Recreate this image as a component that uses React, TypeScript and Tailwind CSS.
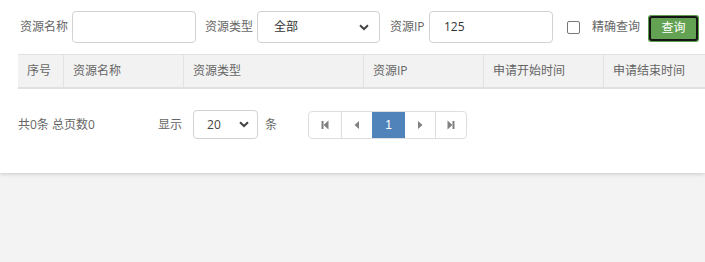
import React from "react";

const font = { fontFamily: '"Open Sans", "Noto Sans CJK SC", sans-serif' };

function Chevron({ className = "" }: { className?: string }) {
  return (
    <svg width="10" height="7" viewBox="0 0 10 7" className={className}>
      <path d="M1 1.2 L5 5 L9 1.2" fill="none" stroke="#444" strokeWidth="2" />
    </svg>
  );
}

function FirstIcon() {
  return (
    <svg width="10" height="10" viewBox="0 0 10 10">
      <rect x="1.5" y="1" width="2" height="8" fill="#808080" />
      <path d="M8.5 0.5 L3.5 5 L8.5 9.5 Z" fill="#808080" />
    </svg>
  );
}
function PrevIcon() {
  return (
    <svg width="10" height="10" viewBox="0 0 10 10">
      <path d="M7 1 L2.5 5 L7 9 Z" fill="#808080" />
    </svg>
  );
}
function NextIcon() {
  return (
    <svg width="10" height="10" viewBox="0 0 10 10">
      <path d="M3 1 L7.5 5 L3 9 Z" fill="#808080" />
    </svg>
  );
}
function LastIcon() {
  return (
    <svg width="10" height="10" viewBox="0 0 10 10">
      <path d="M1.5 0.5 L6.5 5 L1.5 9.5 Z" fill="#808080" />
      <rect x="6.5" y="1" width="2" height="8" fill="#808080" />
    </svg>
  );
}

export default function App() {
  const cols = [
    { t: "序号", w: "w-[45px]" },
    { t: "资源名称", w: "w-[120px]" },
    { t: "资源类型", w: "w-[180px]" },
    { t: "资源IP", w: "w-[120px]" },
    { t: "申请开始时间", w: "w-[120px]" },
    { t: "申请结束时间", w: "w-[102px]" },
  ];
  return (
    <div className="min-h-[262px] bg-[#f3f3f3] text-[12px] text-[#555]" style={font}>
      <div className="bg-white h-[173px] pt-[11px] pl-[18px] shadow-[0_1px_4px_rgba(0,0,0,0.18)]">
        {/* search row */}
        <div className="flex items-center h-[32px] leading-[16px]">
          <span className="w-[54px] pl-[2px] text-[#666]">资源名称</span>
          <div className="w-[124px] h-[32px] border border-[#d2d2d2] rounded-[4px] bg-white" />
          <span className="ml-[9px] w-[52px] text-[#666]">资源类型</span>
          <div className="w-[123px] h-[32px] border border-[#d2d2d2] rounded-[4px] bg-white flex items-center justify-between pl-[16px] pr-[10px] text-[#333]">
            <span>全部</span>
            <Chevron />
          </div>
          <span className="ml-[10px] w-[39px] text-[#666]">资源IP</span>
          <div className="w-[124px] h-[32px] border border-[#d2d2d2] rounded-[4px] bg-white flex items-center pl-[14px] text-[#333]">
            125
          </div>
          <div className="ml-[14px] w-[13px] h-[13px] border border-[#777] rounded-[2px] bg-white" />
          <span className="ml-[12px] w-[56px] text-[#666]">精确查询</span>
          <div className="h-[27px] w-[51px] rounded-[3px] bg-[#5f9e4f] p-[1px] mt-[2px]">
            <div className="h-full w-full rounded-[3px] border-2 border-[#151515] bg-[#63a253] flex items-center justify-center text-white text-[12px]">
              查询
            </div>
          </div>
        </div>

        {/* table header */}
        <div className="mt-[11px] flex h-[35px] bg-[#f2f2f2] border-t border-[#e2e2e2] border-b-2 border-b-[#e0e0e0] text-[#666]">
          {cols.map((c, i) => (
            <div
              key={i}
              className={`${c.w} shrink-0 flex items-center pl-[9px] ${i > 0 ? "border-l border-[#e2e2e2]" : ""}`}
            >
              {c.t}
            </div>
          ))}
        </div>

        {/* pager row */}
        <div className="mt-[21px] flex items-center h-[29px] leading-[16px]">
          <span className="w-[140px] text-[#666]">共0条 总页数0</span>
          <span className="text-[#666]">显示</span>
          <div className="ml-[11px] w-[65px] h-[29px] border border-[#d2d2d2] rounded-[4px] flex items-center justify-between pl-[13px] pr-[8px] text-[#444]">
            <span>20</span>
            <Chevron />
          </div>
          <span className="ml-[7px] text-[#666]">条</span>
          <div className="ml-[31px] flex h-[28px] border border-[#dedede] rounded-[4px] overflow-hidden">
            <div className="w-[32px] flex items-center justify-center"><FirstIcon /></div>
            <div className="w-[31px] flex items-center justify-center border-l border-[#dedede]"><PrevIcon /></div>
            <div className="w-[33px] flex items-center justify-center bg-[#5183bb] text-white" style={{ fontFamily: '"Liberation Sans", sans-serif' }}>1</div>
            <div className="w-[30px] flex items-center justify-center"><NextIcon /></div>
            <div className="w-[31px] flex items-center justify-center border-l border-[#dedede]"><LastIcon /></div>
          </div>
        </div>
      </div>
    </div>
  );
}
